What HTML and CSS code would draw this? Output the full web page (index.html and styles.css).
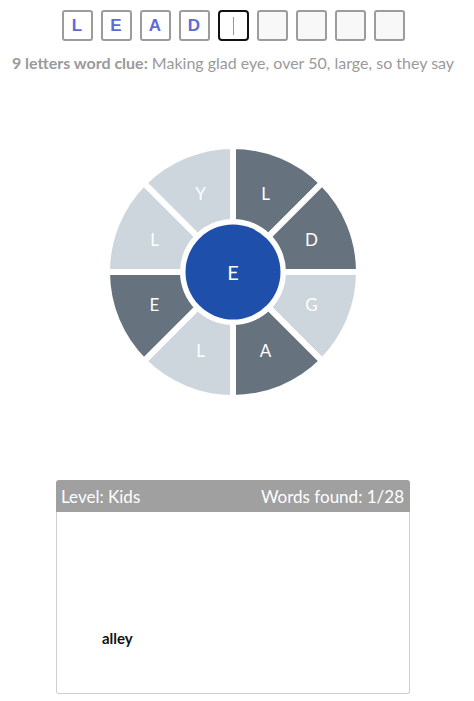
FILE: index.html
```html
<!DOCTYPE html>
<html>
<head>
<meta charset="utf-8">
<link rel="stylesheet" href="styles.css">
</head>
<body>
<div class="wrap">
  <div class="tiles">
    <div class="tile filled">L</div>
    <div class="tile filled">E</div>
    <div class="tile filled">A</div>
    <div class="tile filled">D</div>
    <div class="tile active"><span class="cursor"></span></div>
    <div class="tile empty"></div>
    <div class="tile empty"></div>
    <div class="tile empty"></div>
    <div class="tile empty"></div>
  </div>
  <p class="clue"><b>9 letters word clue:</b> Making glad eye, over 50, large, so they say</p>
  <div class="wheel">
    <svg width="256" height="256" viewBox="0 0 256 256">
      <g stroke="#fff" stroke-width="6" stroke-linejoin="miter">
        <path d="M128 128 L128 2 A126 126 0 0 1 217.1 38.9 Z" fill="#66737e"/>
        <path d="M128 128 L217.1 38.9 A126 126 0 0 1 254 128 Z" fill="#66737e"/>
        <path d="M128 128 L254 128 A126 126 0 0 1 217.1 217.1 Z" fill="#cdd6dd"/>
        <path d="M128 128 L217.1 217.1 A126 126 0 0 1 128 254 Z" fill="#66737e"/>
        <path d="M128 128 L128 254 A126 126 0 0 1 38.9 217.1 Z" fill="#cdd6dd"/>
        <path d="M128 128 L38.9 217.1 A126 126 0 0 1 2 128 Z" fill="#66737e"/>
        <path d="M128 128 L2 128 A126 126 0 0 1 38.9 38.9 Z" fill="#cdd6dd"/>
        <path d="M128 128 L38.9 38.9 A126 126 0 0 1 128 2 Z" fill="#cdd6dd"/>
      </g>
      <circle cx="128" cy="128" r="53" fill="#fff"/>
      <circle cx="128" cy="128" r="47.5" fill="#1e4fab"/>
      <g class="letters" text-anchor="middle" dominant-baseline="central">
        <text x="160.5" y="49.5">L</text>
        <text x="206.5" y="95.5">D</text>
        <text x="206.5" y="160.5">G</text>
        <text x="160.5" y="206.5">A</text>
        <text x="95.5" y="206.5">L</text>
        <text x="49.5" y="160.5">E</text>
        <text x="49.5" y="95.5">L</text>
        <text x="95.5" y="49.5">Y</text>
        <text class="center" x="128" y="128">E</text>
      </g>
    </svg>
  </div>
  <div class="panel">
    <div class="panel-head">
      <span>Level: Kids</span>
      <span>Words found: 1/28</span>
    </div>
    <div class="panel-body">
      <span class="word">alley</span>
    </div>
  </div>
</div>
</body>
</html>
```
FILE: styles.css
```css
html, body {
  margin: 0;
  padding: 0;
  background: #fff;
}
body {
  font-family: Lato, "Open Sans", sans-serif;
}
.wrap {
  width: 466px;
  display: flex;
  flex-direction: column;
  align-items: center;
}
.tiles {
  display: flex;
  gap: 8px;
  padding-top: 10px;
}
.tile {
  width: 31px;
  height: 31px;
  box-sizing: border-box;
  border: 2px solid #9c9c9c;
  border-radius: 3px;
  display: flex;
  align-items: center;
  justify-content: center;
  font-family: "Liberation Sans", Arial, sans-serif;
  font-weight: bold;
  font-size: 17px;
  color: #5d6bd5;
}
.tile.empty {
  background: #f8f8f8;
}
.tile.active {
  border-color: #111;
  border-radius: 4px;
}
.cursor {
  width: 1px;
  height: 18px;
  background: #8593e0;
}
.clue {
  margin: 12px 0 0;
  font-size: 16px;
  line-height: 20px;
  color: #9a9a9a;
  white-space: nowrap;
}
.clue b {
  font-weight: 700;
}
.wheel {
  margin-top: 71px;
  width: 256px;
  height: 256px;
}
.wheel svg {
  display: block;
}
.letters text {
  fill: #fff;
  font-family: Lato, "Open Sans", sans-serif;
  font-size: 17px;
}
.letters text.center {
  font-size: 20px;
}
.panel {
  margin-top: 80px;
  width: 354px;
}
.panel-head {
  height: 32px;
  background: #a0a0a0;
  color: #fff;
  font-size: 17px;
  display: flex;
  align-items: center;
  justify-content: space-between;
  padding: 0 6px 0 5px;
  border-radius: 3px 3px 0 0;
}
.panel-body {
  height: 182px;
  box-sizing: border-box;
  border: 1px solid #cfcfcf;
  border-top: none;
  border-radius: 0 0 3px 3px;
  padding: 116px 0 0 45px;
}
.word {
  font-weight: 700;
  font-size: 15px;
  color: #111;
}
```
